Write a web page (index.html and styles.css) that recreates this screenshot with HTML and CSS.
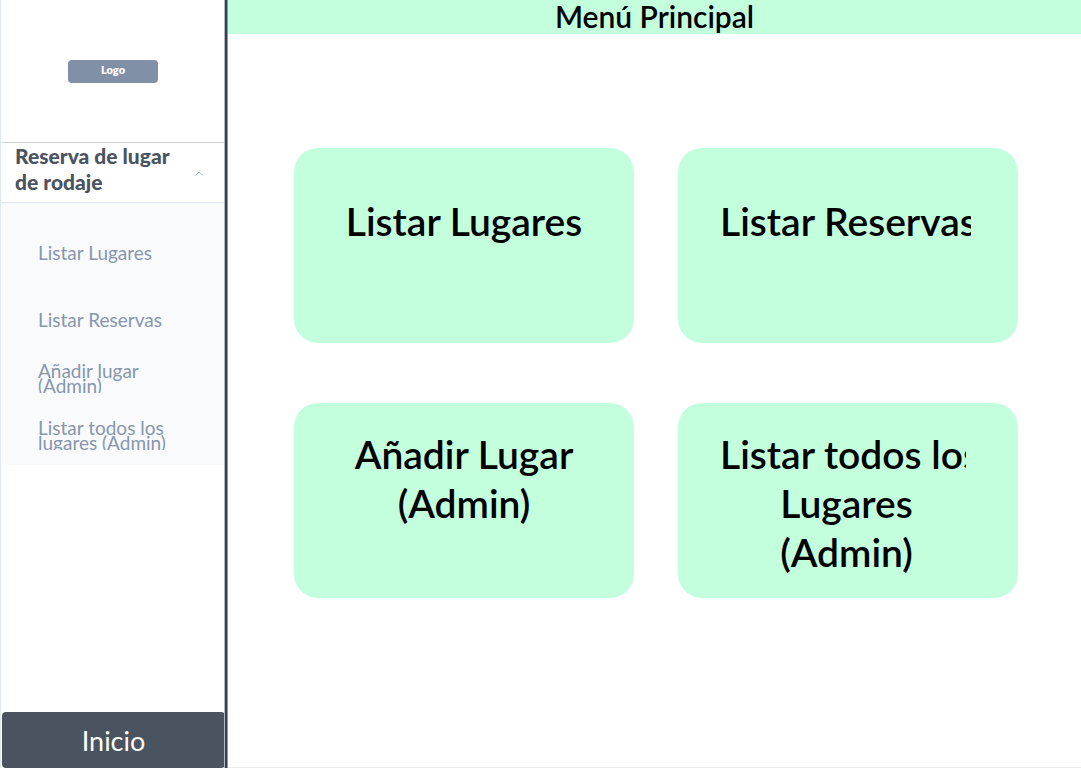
FILE: index.html
```html
<!DOCTYPE html>
<html lang="es">
<head>
  <meta charset="utf-8">
  <meta name="viewport" content="width=device-width, initial-scale=1">
  <title>Menú Principal</title>
  <link rel="stylesheet" href="styles.css">
</head>
<body>
  <div class="app">
    <aside class="sidebar">
      <div class="brand"><span class="logo">Logo</span></div>
      <button class="section-toggle" type="button" aria-expanded="true" aria-controls="section-menu">
        <span class="section-title">Reserva de lugar de rodaje</span>
        <svg class="chevron" viewBox="0 0 8 5" aria-hidden="true"><path d="M0.5 4.2 L4 1 L7.5 4.2"/></svg>
      </button>
      <nav class="menu" id="section-menu">
        <div class="menu-group menu-group-wide">
          <a class="menu-link" href="#lugares">Listar Lugares</a>
          <a class="menu-link" href="#reservas">Listar Reservas</a>
        </div>
        <div class="menu-group">
          <a class="menu-link" href="#nuevo">Añadir lugar (Admin)</a>
          <a class="menu-link" href="#todos">Listar todos los lugares (Admin)</a>
        </div>
      </nav>
      <button class="home" type="button">Inicio</button>
    </aside>
    <main class="main">
      <header class="header"><h1 class="title">Menú Principal</h1></header>
      <div class="cards">
        <button class="card" type="button"><span class="label">Listar Lugares</span></button>
        <button class="card card-start" type="button"><span class="label"><span class="line line-wide">Listar Reservas</span></span></button>
        <button class="card card-tall" type="button"><span class="label">Añadir Lugar (Admin)</span></button>
        <button class="card card-tall card-start" type="button"><span class="label"><span class="line">Listar todos los</span>Lugares<br>(Admin)</span></button>
      </div>
    </main>
  </div>
</body>
</html>
```

FILE: styles.css
```css
* { box-sizing: border-box; }

body {
  margin: 0;
  font-family: Lato, "Liberation Sans", sans-serif;
  background: #fff;
  color: #000;
}

button {
  font-family: inherit;
  border: 0;
  cursor: pointer;
}

.app {
  display: grid;
  grid-template-columns: 228px 1fr;
  min-height: 100vh;
}

.sidebar {
  display: flex;
  flex-direction: column;
  padding-right: 3px;
  border-left: 1px solid #e2e8f0;
}

.brand {
  display: flex;
  justify-content: center;
  padding: 60px 0 59px;
}

.logo {
  width: 90px;
  padding: 3px 0 6px;
  border-radius: 4px;
  background: #8190a6;
  color: #fff;
  font-size: 11px;
  font-weight: 800;
  line-height: 14px;
  text-align: center;
}

.section-toggle {
  display: flex;
  align-items: center;
  justify-content: space-between;
  padding: 0 22px 7px 14px;
  border-top: 1px solid #cbd5e0;
  border-bottom: 1px solid #dde5ee;
  background: #fff;
  color: #4a5460;
  font-size: 21px;
  font-weight: 900;
  line-height: 26px;
  text-align: left;
}

.section-title { width: 170px; }

.chevron {
  width: 8px;
  height: 5px;
  margin-top: 8px;
  fill: none;
  stroke: #a3b2c6;
}

.menu {
  display: flex;
  flex-direction: column;
  gap: 29px;
  padding: 34px 50px 15px 37px;
  background: #f8fafc;
}

.menu-group {
  display: flex;
  flex-direction: column;
  gap: 27px;
}

.menu-group-wide { gap: 37px; }

.menu-link {
  display: flex;
  align-items: center;
  height: 30px;
  overflow: hidden;
  color: #8796ac;
  font-size: 19px;
  line-height: 15px;
  text-decoration: none;
}

.home {
  margin: auto 0 0 1px;
  padding: 12px 0 10px;
  border-radius: 4px;
  background: #4a5460;
  color: #fff;
  font-size: 27px;
  line-height: 34px;
}

/* The divider is a dark rule with a soft edge on each side. */
.main {
  display: flex;
  flex-direction: column;
  border-bottom: 1px solid #ebebeb;
  box-shadow: -1px 0 #8f97a1, -3px 0 #36424f, -4px 0 #b4bac2;
}

.header { background: #c3ffdd; }

.title {
  margin: 0;
  padding-bottom: 2px;
  font-size: 30px;
  font-weight: 600;
  line-height: 32px;
  text-align: center;
}

.cards {
  display: grid;
  grid-template-columns: 1fr 1fr;
  gap: 60px 44px;
  padding: 114px 63px 114px 66px;
}

.card {
  display: flex;
  align-items: flex-start;
  justify-content: center;
  min-height: 195px;
  padding: 49px 42px 0;
  border-radius: 24px;
  background: #c3ffdd;
  color: #000;
  font-size: 39px;
  font-weight: 600;
  line-height: 49px;
}

.card-tall { padding-top: 27px; }

.card-start { justify-content: flex-start; }

.label { width: 253px; }

.line {
  display: block;
  width: 246px;
  overflow: hidden;
  white-space: nowrap;
}

.line-wide { width: 251px; }
```
